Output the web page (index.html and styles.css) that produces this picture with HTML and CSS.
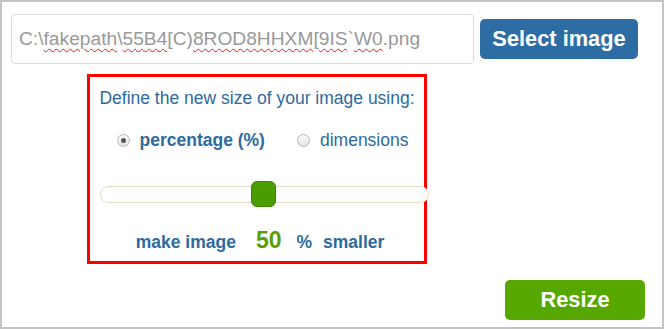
FILE: index.html
```html
<!DOCTYPE html>
<html lang="en">
<head>
  <meta charset="UTF-8" />
  <title>Resize image</title>
  <link rel="stylesheet" href="styles.css">
</head>
<body>
  <div class="frame">
    <div class="file-row">
      <div class="file-path">C:\<span class="typo">fakepath</span>\<span class="typo">55B4</span>[C)<span class="typo">8ROD8HHXM</span>[<span class="typo">9IS</span>`<span class="typo">W0</span>.png</div>
      <button class="btn btn-blue" type="button">Select image</button>
    </div>

    <div class="resize-box">
      <p class="prompt">Define the new size of your image using:</p>

      <div class="modes">
        <label class="mode mode-active"><span class="radio checked"></span>percentage (%)</label>
        <label class="mode"><span class="radio"></span>dimensions</label>
      </div>

      <div class="slider">
        <div class="slider-track"></div>
        <div class="slider-thumb"></div>
      </div>

      <div class="summary">
        <span class="make">make image</span>
        <span class="amount">50</span>
        <span class="unit">%</span>
        <span>smaller</span>
      </div>
    </div>

    <div class="actions">
      <button class="btn btn-green" type="button">Resize</button>
    </div>
  </div>
</body>
</html>
```

FILE: styles.css
```css
body {
  margin: 0;
  padding: 0;
  font-family: 'Liberation Sans', Arial, sans-serif;
  background-color: #fff;
}

.frame {
  width: 664px;
  height: 329px;
  box-sizing: border-box;
  border: 2px solid #c3c3c3;
  display: flex;
  flex-direction: column;
}

.file-row {
  display: flex;
  align-items: center;
  gap: 6px;
  padding: 12px 0 0 9px;
}

.file-path {
  width: 463px;
  height: 50px;
  box-sizing: border-box;
  border: 1px solid #dcdcdc;
  border-radius: 4px;
  padding-left: 7px;
  line-height: 48px;
  font-size: 19.2px;
  color: #999;
  white-space: nowrap;
  overflow: hidden;
}

.typo {
  text-decoration: underline wavy #e02020;
  text-decoration-thickness: 1px;
  text-underline-offset: 3px;
}

.btn {
  border: none;
  border-radius: 5px;
  color: #fff;
  font-family: 'Liberation Sans', Arial, sans-serif;
  font-weight: bold;
  font-size: 21.8px;
  height: 40px;
  padding: 0;
  cursor: pointer;
}

.btn-blue {
  width: 158px;
  background-color: #2e6da4;
}

.btn-green {
  width: 140px;
  background-color: #56a800;
}

.resize-box {
  width: 340px;
  height: 190px;
  box-sizing: border-box;
  border: 3px solid #f00;
  margin: 10px 0 0 85px;
  display: flex;
  flex-direction: column;
  align-items: center;
  color: #2d6aa0;
}

.prompt {
  margin: 12px 0 0;
  font-size: 17.5px;
  line-height: 19px;
}

.modes {
  display: flex;
  gap: 32px;
  margin: 22px 0 0 11px;
  font-size: 17.5px;
  line-height: 20px;
}

.mode {
  display: flex;
  align-items: center;
}

.mode-active {
  font-weight: bold;
}

.radio {
  width: 11px;
  height: 11px;
  border: 1px solid #b5b5b5;
  border-radius: 50%;
  background: linear-gradient(#fafafa, #e3e3e3);
  margin-right: 10px;
  position: relative;
}

.radio.checked::after {
  content: "";
  position: absolute;
  left: 3px;
  top: 3px;
  width: 5px;
  height: 5px;
  border-radius: 50%;
  background-color: #555;
}

.slider {
  position: relative;
  align-self: flex-start;
  width: 329px;
  height: 26px;
  margin: 31px 0 0 10px;
}

.slider-track {
  position: absolute;
  left: 0;
  right: 0;
  top: 5px;
  height: 17px;
  box-sizing: border-box;
  border: 1px solid #e3dcc6;
  border-radius: 9px;
  background-color: #fff;
}

.slider-thumb {
  position: absolute;
  left: 151px;
  top: 0;
  width: 25px;
  height: 26px;
  box-sizing: border-box;
  border: 1px solid #3d8500;
  border-radius: 6px;
  background-color: #4b9c00;
}

.summary {
  display: flex;
  align-items: baseline;
  margin: 20px 0 0 6px;
  font-size: 17.5px;
  font-weight: bold;
}

.summary .make {
  margin-right: 20px;
}

.summary .amount {
  font-size: 23px;
  color: #5a9f00;
  margin-right: 15px;
}

.summary .unit {
  margin-right: 11px;
}

.actions {
  margin-top: auto;
  display: flex;
  justify-content: flex-end;
  padding: 0 17px 7px 0;
}
```
